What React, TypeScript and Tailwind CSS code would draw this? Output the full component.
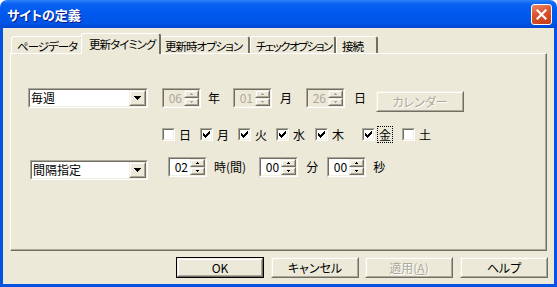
import React from "react";

const FONT = "font-['Noto_Sans_CJK_JP',sans-serif] [font-feature-settings:'palt']";

function Sunken({ className = "", inner = "", children }: { className?: string; inner?: string; children?: React.ReactNode }) {
  return (
    <div className={`border border-t-[#ACA899] border-l-[#ACA899] border-b-white border-r-white ${className}`}>
      <div className={`h-full w-full border border-t-[#716F64] border-l-[#716F64] border-b-[#F1EFE2] border-r-[#F1EFE2] ${inner}`}>
        {children}
      </div>
    </div>
  );
}

function Raised({ className = "", children }: { className?: string; children?: React.ReactNode }) {
  return (
    <div className={`bg-[#ECE9D8] border border-t-[#F1EFE2] border-l-[#F1EFE2] border-b-[#716F64] border-r-[#716F64] ${className}`}>
      <div className="h-full w-full flex items-center justify-center border border-t-white border-l-white border-b-[#ACA899] border-r-[#ACA899]">
        {children}
      </div>
    </div>
  );
}

function SmallArrow({ up, color }: { up?: boolean; color: string }) {
  return (
    <svg width="3" height="2" viewBox="0 0 3 2" shapeRendering="crispEdges">
      <rect x="1" y={up ? 0 : 1} width="1" height="1" fill={color} />
      <rect x="0" y={up ? 1 : 0} width="3" height="1" fill={color} />
    </svg>
  );
}

function Spin({ value, disabled }: { value: string; disabled?: boolean }) {
  const c = disabled ? "#ACA899" : "#000000";
  return (
    <Sunken className="w-[39px] h-[20px] shrink-0" inner={`flex ${disabled ? "bg-[#ECE9D8]" : "bg-white"}`}>
      <div className={`flex-1 flex items-center justify-end pr-[2px] text-[12px] leading-none ${disabled ? "text-[#ACA899]" : "text-black"}`}>
        {value}
      </div>
      <div className="flex flex-col w-[15px]">
        <Raised className="h-[8px]">
          <SmallArrow up color={c} />
        </Raised>
        <Raised className="h-[8px]">
          <SmallArrow color={c} />
        </Raised>
      </div>
    </Sunken>
  );
}

function Combo({ value, className = "" }: { value: string; className?: string }) {
  return (
    <Sunken className={`h-[20px] shrink-0 ${className}`} inner="flex bg-white">
      <div className="flex-1 flex items-center pl-[1px] text-[12px] leading-none">{value}</div>
      <Raised className="w-[17px] h-full">
        <svg width="7" height="4" viewBox="0 0 7 4" shapeRendering="crispEdges">
          <rect x="0" y="0" width="7" height="1" fill="#000" />
          <rect x="1" y="1" width="5" height="1" fill="#000" />
          <rect x="2" y="2" width="3" height="1" fill="#000" />
          <rect x="3" y="3" width="1" height="1" fill="#000" />
        </svg>
      </Raised>
    </Sunken>
  );
}

function Check({ checked, label, width, focus }: { checked: boolean; label: string; width: string; focus?: boolean }) {
  return (
    <div className={`flex items-center h-[17px] shrink-0 ${width}`}>
      <Sunken className="w-[13px] h-[13px] shrink-0" inner="bg-white flex items-center justify-center">
        {checked && (
          <svg width="7" height="7" viewBox="0 0 7 7" shapeRendering="crispEdges">
            <path d="M6 0h1v3h-1v1h-1v1h-1v1h-1v1h-1v-1h-1v-1h-1v-3h1v1h1v1h1v-1h1v-1h1z" fill="#000" />
          </svg>
        )}
      </Sunken>
      {focus ? (
        <span className="ml-[2px] h-[17px] px-[1px] flex items-center border border-dotted border-black text-[12px] leading-none">
          {label}
        </span>
      ) : (
        <span className="ml-[4px] text-[12px] leading-none">{label}</span>
      )}
    </div>
  );
}

function Button({ label, isDefault, disabled, className = "" }: { label: React.ReactNode; isDefault?: boolean; disabled?: boolean; className?: string }) {
  return (
    <div className={`w-[88px] h-[21px] shrink-0 ${isDefault ? "border border-black" : ""} ${className}`}>
      <Raised className="h-full w-full">
        <span
          className={`text-[12px] leading-none ${disabled ? "text-[#ACA899] [text-shadow:1px_1px_0_#ffffff]" : "text-black"}`}
        >
          {label}
        </span>
      </Raised>
    </div>
  );
}

function Tab({ label, width, active, tight }: { label: string; width: string; active?: boolean; tight?: boolean }) {
  const track = tight ? "tracking-[-1.6px]" : "tracking-[-1px]";
  if (active) {
    return (
      <div
        className={`relative z-20 -mx-[2px] -mb-px h-[21px] ${width} bg-[#ECE9D8] rounded-t-[3px] border-t border-l border-white border-r-2 border-r-[#716F64] flex items-start pt-[3px] pl-[7px] text-[11.5px] leading-[14px] ${track} whitespace-nowrap`}
      >
        {label}
      </div>
    );
  }
  return (
    <div
      className={`relative z-0 h-[17px] ${width} bg-[#ECE9D8] rounded-t-[3px] border-t border-l border-white border-r-2 border-r-[#716F64] flex items-start pt-[2px] pl-[5px] text-[11.5px] leading-[14px] ${track} whitespace-nowrap overflow-hidden`}
    >
      {label}
    </div>
  );
}

function Kanji({ children, className = "" }: { children: React.ReactNode; className?: string }) {
  return <span className={`h-[20px] flex items-center text-[12px] leading-none shrink-0 ${className}`}>{children}</span>;
}

export default function App() {
  return (
    <div className={`w-[557px] h-[287px] flex flex-col bg-white text-black ${FONT}`}>
      {/* title bar */}
      <div className="h-[28px] shrink-0 rounded-t-[7px] flex items-center bg-[linear-gradient(180deg,#2D83FA_0%,#0A62F2_14%,#0058EE_45%,#0055E6_82%,#0045D2_100%)]">
        <span className="ml-[7px] pt-[1px] text-[13px] font-bold text-white [text-shadow:1px_1px_0_#0A1883]">サイトの定義</span>
        <div className="ml-auto mr-[5px] w-[21px] h-[21px] rounded-[3px] border border-white bg-[linear-gradient(160deg,#EE8865_0%,#D9532C_45%,#C43B18_100%)] flex items-center justify-center">
          <svg width="11" height="11" viewBox="0 0 11 11">
            <path d="M1.5 1.5L9.5 9.5M9.5 1.5L1.5 9.5" stroke="#fff" strokeWidth="2.2" strokeLinecap="square" />
          </svg>
        </div>
      </div>

      {/* client */}
      <div className="flex-1 flex flex-col bg-[#ECE9D8] border-x-[3px] border-b-[3px] border-[#0553E2] px-[7px] pt-[5px]">
        {/* tabs */}
        <div className="flex items-end h-[20px] pl-[1px]">
          <Tab label="ページデータ" width="w-[72px]" />
          <Tab label="更新タイミング" width="w-[80px]" active />
          <Tab label="更新時オプション" width="w-[91px]" />
          <Tab label="チェックオプション" width="w-[86px]" tight />
          <Tab label="接続" width="w-[42px]" />
        </div>

        {/* panel */}
        <div className="relative z-10 h-[198px] border border-t-white border-l-white border-b-[#716F64] border-r-[#716F64]">
          <div className="h-full w-full flex flex-col border-b border-r border-[#ACA899]">
            {/* row 1 */}
            <div className="flex items-start mt-[34px] ml-[17px]">
              <Combo value="毎週" className="w-[120px]" />
              <div className="ml-[14px]">
                <Spin value="06" disabled />
              </div>
              <Kanji className="ml-[7px]">年</Kanji>
              <div className="ml-[13px]">
                <Spin value="01" disabled />
              </div>
              <Kanji className="ml-[8px]">月</Kanji>
              <div className="ml-[14px]">
                <Spin value="26" disabled />
              </div>
              <Kanji className="ml-[9px]">日</Kanji>
              <Button label="カレンダー" disabled className="ml-[10px] mt-[3px]" />
            </div>

            {/* row 2 */}
            <div className="flex items-center mt-[14px] ml-[151px]">
              <Check checked={false} label="日" width="w-[38px]" />
              <Check checked label="月" width="w-[38px]" />
              <Check checked label="火" width="w-[38px]" />
              <Check checked label="水" width="w-[39px]" />
              <Check checked label="木" width="w-[47px]" />
              <Check checked label="金" width="w-[40px]" focus />
              <Check checked={false} label="土" width="w-[30px]" />
            </div>

            {/* row 3 */}
            <div className="flex items-start mt-[14px] ml-[19px]">
              <Combo value="間隔指定" className="w-[118px] mt-[3px]" />
              <div className="ml-[20px]">
                <Spin value="02" />
              </div>
              <Kanji className="ml-[7px]">時(間)</Kanji>
              <div className="ml-[13px]">
                <Spin value="00" />
              </div>
              <Kanji className="ml-[8px]">分</Kanji>
              <div className="ml-[9px]">
                <Spin value="00" />
              </div>
              <Kanji className="ml-[7px]">秒</Kanji>
            </div>
          </div>
        </div>

        {/* buttons */}
        <div className="flex justify-end mt-[6px] -mr-px">
          <Button label="OK" isDefault className="mr-[7px]" />
          <Button label="キャンセル" className="mr-[6px]" />
          <Button
            label={
              <>
                適用(<span className="underline">A</span>)
              </>
            }
            disabled
            className="mr-[7px]"
          />
          <Button label="ヘルプ" />
        </div>
      </div>
    </div>
  );
}
